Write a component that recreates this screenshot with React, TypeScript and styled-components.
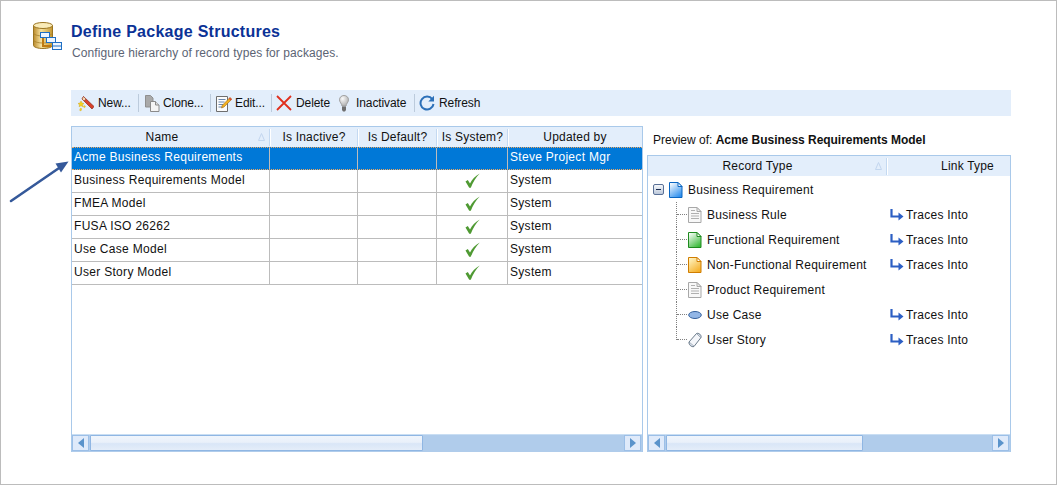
import React from "react";
import styled, { createGlobalStyle } from "styled-components";

const Global = createGlobalStyle`
  html, body { margin: 0; padding: 0; background: #fff; }
  * { box-sizing: border-box; }
`;

const Page = styled.div`
  position: relative;
  width: 1057px;
  height: 485px;
  border: 1px solid #bcbcbc;
  background: #fff;
  padding: 21px 45px 32px 32px;
  font: 12px "Liberation Sans", Arial, sans-serif;
  letter-spacing: 0.24px;
  color: #111;
  display: flex;
  flex-direction: column;
`;
const Header = styled.header`
  display: flex;
  height: 68px;
  gap: 8px;
`;
const HeaderText = styled.div`
  display: flex;
  flex-direction: column;
  gap: 4px;
`;
const Title = styled.h1`
  margin: 0;
  font: bold 16px/20px "Liberation Sans", Arial, sans-serif;
  letter-spacing: 0.26px;
  color: #0b3296;
`;
const Subtitle = styled.div`
  line-height: 14px;
  color: #5c6474;
  margin-left: 1px;
  letter-spacing: 0.08px;
`;
const Toolbar = styled.div`
  margin-left: 38px;
  height: 26px;
  background: #e3eefb;
  display: flex;
  align-items: center;
  padding-left: 7px;
  flex: none;
  letter-spacing: -0.1px;
`;
const Tool = styled.div<{ $gap: number; $w: number }>`
  display: flex;
  align-items: center;
  gap: ${(p) => p.$gap}px;
  width: ${(p) => p.$w}px;
  white-space: nowrap;
  flex: none;
`;
const Sep = styled.div<{ $w: number }>`
  flex: none;
  width: ${(p) => p.$w}px;
  height: 18px;
  &::before {
    content: "";
    display: block;
    width: 1px;
    height: 18px;
    background: #bccbdc;
  }
`;
const Panels = styled.div`
  margin: 10px 0 0 38px;
  display: flex;
  gap: 4px;
  flex: 1;
  min-height: 0;
`;
const LeftPane = styled.section`
  width: 572px;
  flex: none;
  display: flex;
  letter-spacing: 0.3px;
`;
const RightPane = styled.section`
  width: 364px;
  flex: none;
  display: flex;
  flex-direction: column;
`;
const PreviewLabel = styled.div`
  height: 29px;
  padding: 7px 0 0 6px;
  line-height: 14px;
  letter-spacing: 0;
  b { font-weight: bold; letter-spacing: -0.03px; }
`;
const GridBox = styled.div`
  flex: 1;
  min-height: 0;
  display: flex;
  flex-direction: column;
  border: 1px solid #a9c9ea;
  border-bottom: none;
  background: #fff;
`;
const HeadRow = styled.div`
  display: flex;
  height: 20px;
  flex: none;
  background: #e3eefb;
  letter-spacing: 0.2px;
`;
const HeadCell = styled.div<{ $w: number; $sep?: boolean; $pl?: number; $pr?: number }>`
  position: relative;
  width: ${(p) => p.$w}px;
  flex: none;
  text-align: center;
  line-height: 20px;
  white-space: nowrap;
  padding-left: ${(p) => p.$pl ?? 0}px;
  padding-right: ${(p) => p.$pr ?? 0}px;
  &::after {
    content: "";
    display: ${(p) => (p.$sep === false ? "none" : "block")};
    position: absolute;
    right: 0;
    top: 2px;
    bottom: 1px;
    width: 1px;
    background: #c4d9f1;
    box-shadow: 1px 0 0 #fff;
  }
`;
const SortMark = styled.svg`
  position: absolute;
  right: 5px;
  top: 6px;
`;
const GridBody = styled.div`
  flex: 1;
  min-height: 0;
`;
const Row = styled.div<{ $sel?: boolean }>`
  display: flex;
  height: 23px;
  line-height: ${(p) => (p.$sel ? 19 : 21)}px;
  background: ${(p) => (p.$sel ? "#0078d7" : "#fff")};
  color: ${(p) => (p.$sel ? "#fff" : "#111")};
  border-bottom: 1px solid #bcbcbc;
  ${(p) => (p.$sel ? "border-top: 1px dotted #f0a860; border-bottom: 1px dotted #f0a860;" : "")}
`;
const Cell = styled.div<{ $w: number; $center?: boolean }>`
  width: ${(p) => p.$w}px;
  flex: none;
  padding-left: ${(p) => (p.$center ? 0 : 2)}px;
  padding-bottom: ${(p) => (p.$center ? 2 : 0)}px;
  border-right: 1px solid #bcbcbc;
  white-space: nowrap;
  display: flex;
  align-items: ${(p) => (p.$center ? "center" : "flex-start")};
  justify-content: ${(p) => (p.$center ? "center" : "flex-start")};
  &:last-child { border-right: none; }
`;
const Bar = styled.div`
  height: 18px;
  flex: none;
  background: #b0cceb;
  border-top: 1px solid #c9def3;
  display: flex;
  align-items: flex-start;
  padding: 0 1px 0 0;
`;
const BarButton = styled.div`
  width: 17px;
  height: 16px;
  flex: none;
  background: #dfeafa;
  border: 1px solid #fff;
  outline: 1px solid #9cbfe7;
  outline-offset: -1px;
  display: flex;
  align-items: center;
  justify-content: center;
`;
const Thumb = styled.div<{ $w: number }>`
  width: ${(p) => p.$w}px;
  height: 16px;
  margin-left: 1px;
  flex: none;
  border: 1px solid #8fb6e3;
  border-radius: 1px;
  background: linear-gradient(#f0f5fc 0%, #e9f0fa 45%, #d9e6f7 55%, #e4edf9 100%);
`;
const Spacer = styled.div`
  flex: 1;
`;
const Tree = styled.div`
  padding-top: 1px;
`;
const TreeRow = styled.div<{ $child?: boolean; $last?: boolean }>`
  position: relative;
  display: flex;
  align-items: center;
  gap: 5px;
  height: 25px;
  padding-left: ${(p) => (p.$child ? 40 : 5)}px;
  ${(p) =>
    p.$child
      ? `
    gap: 0;
    &::before {
      content: "";
      position: absolute;
      left: 28px;
      top: 0;
      height: ${p.$last ? 13 : 25}px;
      border-left: 1px dotted #808080;
    }
    &::after {
      content: "";
      position: absolute;
      left: 29px;
      top: 12px;
      width: 10px;
      border-top: 1px dotted #808080;
    }
  `
      : ""}
`;
const TreeName = styled.div<{ $w: number }>`
  width: ${(p) => p.$w}px;
  flex: none;
  display: flex;
  align-items: center;
  gap: 5px;
  white-space: nowrap;
`;
const Expander = styled.div`
  width: 11px;
  height: 11px;
  flex: none;
  border: 1px solid #5a7096;
  border-radius: 2px;
  background: linear-gradient(#f6f8fb, #bcc8da);
  display: flex;
  align-items: center;
  justify-content: center;
  &::before {
    content: "";
    width: 5px;
    height: 1px;
    background: #1b2c50;
  }
`;
const LinkCell = styled.div`
  display: flex;
  align-items: center;
  gap: 2px;
  white-space: nowrap;
`;
const PointerArrow = styled.svg`
  position: absolute;
  left: 7px;
  top: 155px;
`;

const IconDb = () => (
  <svg width="30" height="30" viewBox="0 0 30 30">
    <defs>
      <linearGradient id="gold" x1="0" x2="1" y1="0" y2="0">
        <stop offset="0" stopColor="#b98a2c" />
        <stop offset="0.4" stopColor="#f8e3a0" />
        <stop offset="1" stopColor="#c4962f" />
      </linearGradient>
    </defs>
    <path d="M0.5 3.5v20c0 1.6 4.3 3 9.5 3s9.5-1.4 9.5-3v-20z" fill="url(#gold)" stroke="#9a7420" />
    <ellipse cx="10" cy="3.5" rx="9.5" ry="3" fill="#f9ebb8" stroke="#9a7420" />
    <path d="M0.5 11c0 1.6 4.3 3 9.5 3s9.5-1.4 9.5-3M0.5 18c0 1.6 4.3 3 9.5 3s9.5-1.4 9.5-3" fill="none" stroke="#a57f28" strokeWidth="0.8" />
    <path d="M10 14v10h8M14 18h5M19 23h3" fill="none" stroke="#c07a10" strokeWidth="2" />
    <rect x="7.5" y="10.5" width="9" height="5" fill="#eef6ff" stroke="#1f6fc4" />
    <rect x="13.5" y="15.5" width="9" height="5" fill="#eef6ff" stroke="#1f6fc4" />
    <rect x="19.5" y="20.5" width="9" height="7" fill="#eef6ff" stroke="#1f6fc4" />
    <path d="M20 24h8" stroke="#1f6fc4" />
  </svg>
);
const IconWand = () => (
  <svg width="16" height="17" viewBox="0 0 16 17">
    <path d="M5.500 1.500L16 11.500L14 14L4 4z" fill="#d8402a" stroke="#8c2a1c" strokeWidth="0.7" />
    <path d="M5.500 1.500L8 4L6 6L4 4z" fill="#f4d7b0" stroke="#8c2a1c" strokeWidth="0.5" />
    <path d="M3 6l1 2 2 .5-1.500 1.300.4 2-1.900-1-1.900 1 .4-2L0 8.500l2-.5z" fill="#f6d21e" stroke="#c99a10" strokeWidth="0.4" />
    <path d="M2.500 13l1.300.8-.8 2.200-1.500-.8zM6 10.500l1.500.8-.8 1.500-1.300-.8z" fill="#f6d21e" stroke="#c99a10" strokeWidth="0.3" />
  </svg>
);
const IconClone = () => (
  <svg width="15" height="17" viewBox="0 0 15 17">
    <path d="M0.500 0.500H5.500L8 3V12H0.500z" fill="#a9a9a9" stroke="#8f8f8f" />
    <path d="M5.500 6.500H10.500L14 10V16.500H5.500z" fill="#f4f4f4" stroke="#8a8a8a" />
    <path d="M10.500 6.500V10H14" fill="#ddd" stroke="#8a8a8a" />
  </svg>
);
const IconEdit = () => (
  <svg width="16" height="17" viewBox="0 0 16 17">
    <path d="M0.500 1.500H11.500V16.500H0.500z" fill="#fbfbfb" stroke="#6e6e6e" />
    <path d="M2.500 4.500h7M2.500 7h6M2.500 9.500h5M2.500 12h4" stroke="#6a86ac" />
    <path d="M14 2.500L15.800 4.300L8 12L5.500 13L6.400 10.200z" fill="#f2b01e" stroke="#a56a10" strokeWidth="0.6" />
    <path d="M14 2.500L15.800 4.300L14.600 5.500L12.800 3.700z" fill="#d84a3a" />
  </svg>
);
const IconX = () => (
  <svg width="16" height="16" viewBox="0 0 16 16">
    <path d="M1 1L15 15M15 1L1 15" stroke="#e0301e" strokeWidth="1.800" fill="none" />
  </svg>
);
const IconBulb = () => (
  <svg width="10" height="17" viewBox="0 0 10 17">
    <defs>
      <radialGradient id="bulb" cx="0.35" cy="0.3" r="0.8">
        <stop offset="0" stopColor="#fafafa" />
        <stop offset="1" stopColor="#a8a8a8" />
      </radialGradient>
    </defs>
    <path d="M5 0.500C2.300 0.500 0.500 2.400 0.500 4.800C0.500 7.300 2.800 8.500 3 11H7C7.200 8.500 9.500 7.300 9.500 4.800C9.500 2.400 7.700 0.500 5 0.500z" fill="url(#bulb)" stroke="#a0a0a0" />
    <path d="M3 11.500h4v3.500l-1 1.500H4l-1-1.500z" fill="#6e6e6e" />
  </svg>
);
const IconRefresh = () => (
  <svg width="16" height="16" viewBox="0 0 16 16">
    <path d="M13.300 4.200A6.500 6.500 0 1 0 14.500 9" fill="none" stroke="#2c70b8" strokeWidth="2" />
    <path d="M15 0.800V6.500H9.300z" fill="#2c70b8" />
  </svg>
);
const IconCheck = () => (
  <svg width="15" height="15" viewBox="0 0 15 15">
    <path d="M0.500 8.500L2.800 7L5 10.500C7 6.500 10.500 2.800 14.800 0.500C10.800 4.500 8 9 5.800 14.800H4.200z" fill="#4f9a33" />
  </svg>
);
const IconDoc = ({ id, light, dark, border }: { id: string; light: string; dark: string; border: string }) => (
  <svg width="14" height="16" viewBox="0 0 14 16">
    <defs>
      <linearGradient id={id} x1="0.1" x2="0.7" y1="0" y2="1">
        <stop offset="0" stopColor={light} />
        <stop offset="1" stopColor={dark} />
      </linearGradient>
    </defs>
    <path d="M0.500 0.500H9L13 4.500V15.500H0.500z" fill={`url(#${id})`} stroke={border} />
    <path d="M9 0.500V4.500H13z" fill="#fff" stroke={border} />
  </svg>
);
const IconPlainDoc = () => (
  <svg width="14" height="16" viewBox="0 0 14 16">
    <path d="M0.500 0.500H9L13 4.500V15.500H0.500z" fill="#f8f8f8" stroke="#a8a8a8" />
    <path d="M9 0.500V4.500H13z" fill="#eee" stroke="#a8a8a8" />
    <path d="M3 3.500h4M3 6.500h8M3 9h8M3 11.500h8" stroke="#b0b0b0" />
  </svg>
);
const IconOval = () => (
  <svg width="14" height="16" viewBox="0 0 14 16">
    <ellipse cx="7" cy="8" rx="6.300" ry="3.500" fill="#92b6e6" stroke="#34609c" />
  </svg>
);
const IconStory = () => (
  <svg width="14" height="16" viewBox="0 0 14 16">
    <path d="M8.500 1.500L13 5.500L6 14.500L1 10z" fill="#f4f6fa" stroke="#6a7a8a" />
    <path d="M8.500 1.500C10.500 0.500 13.800 3 13 5.500" fill="#d5dde8" stroke="#6a7a8a" />
    <path d="M1 10C0.500 12.500 3.500 15.500 6 14.500" fill="#d5dde8" stroke="#6a7a8a" />
  </svg>
);
const IconTrace = () => (
  <svg width="14" height="12" viewBox="0 0 14 12">
    <path d="M1.500 0V7.500H9" fill="none" stroke="#2c5fc4" strokeWidth="2.200" />
    <path d="M8.500 3.500L13.500 7.500L8.500 11.500z" fill="#2c5fc4" />
  </svg>
);
const ArrowL = () => (
  <svg width="6" height="10" viewBox="0 0 6 10"><path d="M6 0V10L0 5z" fill="#5a93cb" /></svg>
);
const ArrowR = () => (
  <svg width="6" height="10" viewBox="0 0 6 10"><path d="M0 0V10L6 5z" fill="#5a93cb" /></svg>
);
const SortIcon = () => (
  <SortMark width="7" height="8" viewBox="0 0 7 8">
    <path d="M3.500 0.500L6.500 7.500H0.500z" fill="none" stroke="#c2d6ee" />
  </SortMark>
);

const Scrollbar = ({ thumb }: { thumb: number }) => (
  <Bar>
    <BarButton><ArrowL /></BarButton>
    <Thumb $w={thumb} />
    <Spacer />
    <BarButton><ArrowR /></BarButton>
  </Bar>
);

const cols = [198, 88, 79, 71, 134];
const records = [
  { name: "Acme Business Requirements", system: false, by: "Steve Project Mgr", sel: true },
  { name: "Business Requirements Model", system: true, by: "System" },
  { name: "FMEA Model", system: true, by: "System" },
  { name: "FUSA ISO 26262", system: true, by: "System" },
  { name: "Use Case Model", system: true, by: "System" },
  { name: "User Story Model", system: true, by: "System" },
];
const tree = [
  { name: "Business Rule", icon: <IconPlainDoc />, link: true },
  { name: "Functional Requirement", icon: <IconDoc id="gr" light="#fff" dark="#3cbb3c" border="#1e8a1e" />, link: true },
  { name: "Non-Functional Requirement", icon: <IconDoc id="or" light="#fff6c8" dark="#f5b02a" border="#d07d00" />, link: true },
  { name: "Product Requirement", icon: <IconPlainDoc />, link: false },
  { name: "Use Case", icon: <IconOval />, link: true },
  { name: "User Story", icon: <IconStory />, link: true },
];

export default function App() {
  return (
    <>
      <Global />
      <Page>
        <Header>
          <IconDb />
          <HeaderText>
            <Title>Define Package Structures</Title>
            <Subtitle>Configure hierarchy of record types for packages.</Subtitle>
          </HeaderText>
        </Header>
        <Toolbar>
          <Tool $gap={4} $w={60}><IconWand />New...</Tool>
          <Sep $w={7} />
          <Tool $gap={3} $w={65}><IconClone />Clone...</Tool>
          <Sep $w={6} />
          <Tool $gap={3} $w={55}><IconEdit />Edit...</Tool>
          <Sep $w={5} />
          <Tool $gap={4} $w={63}><IconX />Delete</Tool>
          <Tool $gap={7} $w={75}><IconBulb />Inactivate</Tool>
          <Sep $w={5} />
          <Tool $gap={4} $w={70}><IconRefresh />Refresh</Tool>
        </Toolbar>
        <Panels>
          <LeftPane>
            <GridBox>
              <HeadRow>
                <HeadCell $w={cols[0]} $pr={18}>Name<SortIcon /></HeadCell>
                <HeadCell $w={cols[1]}>Is Inactive?</HeadCell>
                <HeadCell $w={cols[2]}>Is Default?</HeadCell>
                <HeadCell $w={cols[3]}>Is System?</HeadCell>
                <HeadCell $w={cols[4]} $sep={false}>Updated by</HeadCell>
              </HeadRow>
              <GridBody>
                {records.map((r) => (
                  <Row key={r.name} $sel={r.sel}>
                    <Cell $w={cols[0]}>{r.name}</Cell>
                    <Cell $w={cols[1]} />
                    <Cell $w={cols[2]} />
                    <Cell $w={cols[3]} $center>{r.system && <IconCheck />}</Cell>
                    <Cell $w={cols[4]}>{r.by}</Cell>
                  </Row>
                ))}
              </GridBody>
              <Scrollbar thumb={333} />
            </GridBox>
          </LeftPane>
          <RightPane>
            <PreviewLabel>Preview of: <b>Acme Business Requirements Model</b></PreviewLabel>
            <GridBox>
              <HeadRow>
                <HeadCell $w={239} $pr={20}>Record Type<SortIcon /></HeadCell>
                <HeadCell $w={123} $sep={false} $pl={38}>Link Type</HeadCell>
              </HeadRow>
              <GridBody>
                <Tree>
                  <TreeRow>
                    <Expander />
                    <TreeName $w={200}><IconDoc id="bl" light="#fff" dark="#2f90ee" border="#0a66c2" />Business Requirement</TreeName>
                  </TreeRow>
                  {tree.map((t, i) => (
                    <TreeRow key={t.name} $child $last={i === tree.length - 1}>
                      <TreeName $w={202}>{t.icon}{t.name}</TreeName>
                      {t.link && <LinkCell><IconTrace />Traces Into</LinkCell>}
                    </TreeRow>
                  ))}
                </Tree>
              </GridBody>
              <Scrollbar thumb={197} />
            </GridBox>
          </RightPane>
        </Panels>
        <PointerArrow width="68" height="56" viewBox="0 0 68 56">
          <path d="M3 45L54 10" stroke="#35599a" strokeWidth="2.600" strokeLinecap="round" fill="none" />
          <path d="M60.500 5.500L53 16.500L47.500 7.500z" fill="#35599a" />
        </PointerArrow>
      </Page>
    </>
  );
}
